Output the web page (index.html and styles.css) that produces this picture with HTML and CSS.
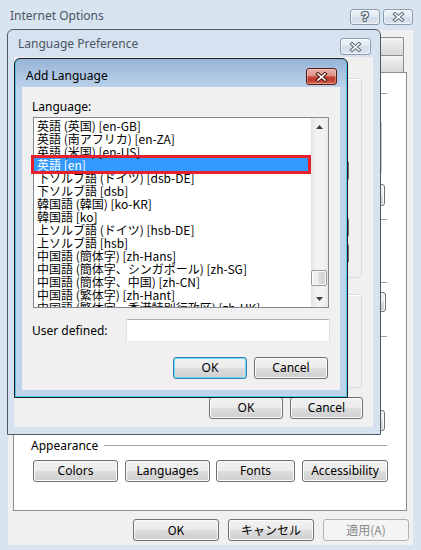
FILE: index.html
```html
<!DOCTYPE html>
<html lang="ja">
<head>
<meta charset="utf-8">
<title>Internet Options</title>
<link rel="stylesheet" href="styles.css">
</head>
<body>
<div class="io">
  <div class="io-title">
    <span class="cap-text">Internet Options</span>
    <div class="io-caps">
      <span class="capbtn"><span class="q">?</span></span>
      <span class="capbtn"><svg width="13" height="10" viewBox="0 0 13 10"><path d="M3 2 L10 8 M10 2 L3 8" stroke="#5a6878" stroke-width="3.6" stroke-linecap="square"/><path d="M3 2 L10 8 M10 2 L3 8" stroke="#fff" stroke-width="1.6" stroke-linecap="square"/></svg></span>
    </div>
  </div>
  <div class="io-client">
    <div class="tabs">
      <div class="tabrow t1"><span class="tab"></span><span class="tab"></span><span class="tab"></span></div>
      <div class="tabrow t2"><span class="tab"></span><span class="tab"></span><span class="tab"></span><span class="tab"></span></div>
    </div>
    <div class="panel">
      <div class="grp g1"><i class="rule"></i></div>
      <div class="homebox"></div>
      <div class="btnrow r1"><span class="btn w85"></span><span class="btn w85"></span><span class="btn w85"></span></div>
      <div class="grp g2"><i class="rule"></i></div>
      <div class="grp g3"><i class="rule"></i></div>
      <div class="btnrow r2"><span class="btn w75"></span></div>
      <div class="grp g4"><i class="rule"></i></div>
      <div class="btnrow r3"><span class="btn w75"></span></div>
      <div class="grp g5"><span>Appearance</span><i class="rule"></i></div>
      <div class="btnrow appear">
        <span class="btn b-colors">Colors</span>
        <span class="btn b-langs">Languages</span>
        <span class="btn b-fonts">Fonts</span>
        <span class="btn b-access">Accessibility</span>
      </div>
    </div>
    <div class="btnrow footer">
      <span class="btn jp">OK</span>
      <span class="btn jp">キャンセル</span>
      <span class="btn jp dis">適用(A)</span>
    </div>
  </div>
</div>

<div class="win lp">
  <div class="lp-title">
    <span class="cap-text">Language Preference</span>
    <span class="capbtn lp-close"><svg width="13" height="10" viewBox="0 0 13 10"><path d="M3 2 L10 8 M10 2 L3 8" stroke="#5a6878" stroke-width="3.6" stroke-linecap="square"/><path d="M3 2 L10 8 M10 2 L3 8" stroke="#fff" stroke-width="1.6" stroke-linecap="square"/></svg></span>
  </div>
  <div class="lp-client">
    <div class="gbox gb1">
      <span class="btn w75 s1"></span>
      <span class="btn w75 s2"></span>
      <span class="btn w75 s3"></span>
    </div>
    <div class="gbox gb2"></div>
    <div class="btnrow lp-btns"><span class="btn w74">OK</span><span class="btn w73">Cancel</span></div>
  </div>
</div>

<div class="win al">
  <div class="al-title">
    <span class="cap-text">Add Language</span>
    <span class="redx"><svg width="13" height="10" viewBox="0 0 13 10"><path d="M3 2 L10 8 M10 2 L3 8" stroke="#4a1810" stroke-width="3.6" stroke-linecap="square"/><path d="M3 2 L10 8 M10 2 L3 8" stroke="#fff" stroke-width="1.6" stroke-linecap="square"/></svg></span>
  </div>
  <div class="al-client">
    <div class="al-label">Language:</div>
    <div class="list">
      <div class="items">
        <div class="item">英語 (英国) [en-GB]</div>
        <div class="item">英語 (南アフリカ) [en-ZA]</div>
        <div class="item">英語 (米国) [en-US]</div>
        <div class="item sel">英語 [en]</div>
        <div class="item">下ソルブ語 (ドイツ) [dsb-DE]</div>
        <div class="item">下ソルブ語 [dsb]</div>
        <div class="item">韓国語 (韓国) [ko-KR]</div>
        <div class="item">韓国語 [ko]</div>
        <div class="item">上ソルブ語 (ドイツ) [hsb-DE]</div>
        <div class="item">上ソルブ語 [hsb]</div>
        <div class="item">中国語 (簡体字) [zh-Hans]</div>
        <div class="item">中国語 (簡体字、シンガポール) [zh-SG]</div>
        <div class="item">中国語 (簡体字、中国) [zh-CN]</div>
        <div class="item">中国語 (繁体字) [zh-Hant]</div>
        <div class="item">中国語 (繁体字、香港特別行政区) [zh-HK]</div>
      </div>
      <div class="sbar">
        <div class="sb-btn"><svg width="7" height="4" viewBox="0 0 7 4"><path d="M3.5 0 L7 4 L0 4 Z" fill="#3f3f3f"/></svg></div>
        <div class="sb-track"><div class="thumb"></div></div>
        <div class="sb-btn"><svg width="7" height="4" viewBox="0 0 7 4"><path d="M0 0 L7 0 L3.5 4 Z" fill="#3f3f3f"/></svg></div>
      </div>
      <div class="mark"></div>
    </div>
    <div class="user-row"><span>User defined:</span><span class="input"></span></div>
    <div class="btnrow al-btns"><span class="btn w74 def">OK</span><span class="btn w74">Cancel</span></div>
  </div>
</div>
</body>
</html>
```

FILE: styles.css
```css
* { box-sizing: border-box; }
html, body { margin: 0; padding: 0; }
body {
  width: 421px;
  height: 550px;
  overflow: hidden;
  position: relative;
  font-family: "Noto Sans", "Noto Sans CJK JP", sans-serif;
  font-size: 12px;
  color: #000;
  background: #d9e4f1;
}

/* ---------- Internet Options (base window) ---------- */
.io {
  width: 421px;
  height: 550px;
  display: flex;
  flex-direction: column;
  background: #d9e4f1;
}
.io-title {
  height: 30px;
  display: flex;
  align-items: flex-start;
  padding-left: 10px;
}
.cap-text {
  line-height: 16px;
  margin-top: 8px;
  color: #4a5563;
  white-space: nowrap;
}
.io-caps {
  margin-left: auto;
  margin-top: 9px;
  margin-right: 8px;
  display: flex;
  gap: 3px;
}
.capbtn {
  width: 30px;
  height: 16px;
  border: 1px solid #8c9cb0;
  border-radius: 3px;
  background: linear-gradient(#eef3f8, #e0e8f1 50%, #d3dde9 50%, #dbe4ee);
  box-shadow: inset 0 0 0 1px rgba(255, 255, 255, 0.55);
  display: flex;
  align-items: center;
  justify-content: center;
}
.q {
  font: bold 12px "Liberation Sans", sans-serif;
  line-height: 12px;
  color: #fff;
  text-shadow: 1px 0 #5a6878, -1px 0 #5a6878, 0 1px #5a6878, 0 -1px #5a6878,
    1px 1px #5a6878, -1px -1px #5a6878, 1px -1px #5a6878, -1px 1px #5a6878;
}
.io-client {
  flex: 1;
  margin: 0 8px 5px;
  background: #f0f0f0;
  padding: 7px 6px 0 5px;
  display: flex;
  flex-direction: column;
}
.tabs {
  height: 35px;
  display: flex;
  flex-direction: column;
}
.tabrow {
  display: flex;
  justify-content: flex-end;
  margin-right: 3px;
}
.tabrow.t1 { height: 18px; }
.tabrow.t2 { height: 17px; }
.tab {
  width: 100px;
  margin-left: -1px;
  border: 1px solid #898c95;
  border-bottom: none;
  border-radius: 2px 2px 0 0;
  background: linear-gradient(#f4f4f4, #e4e4e4 50%, #d8d8d8);
}
.panel {
  height: 439px;
  border: 1px solid #898c95;
  background: #fff;
  padding: 0 18px 0 17px;
  display: flex;
  flex-direction: column;
}
.grp {
  height: 13px;
  line-height: 13px;
  display: flex;
  align-items: center;
  gap: 6px;
  margin-right: 1px;
  white-space: nowrap;
}
.rule {
  flex: 1;
  height: 1px;
  background: #a0a0a0;
}
.g1, .g2, .g3, .g4 { padding-left: 80px; }
.g1 { margin-top: 14px; }
.homebox {
  margin: 22px 6px 0 40px;
  height: 51px;
  border: 1px solid #c9ccd2;
}
.r1 { margin-top: 11px; margin-right: 3px; justify-content: flex-end; gap: 7px; }
.g2 { margin-top: 7px; }
.g3 { margin-top: 50px; }
.r2 { margin-top: 3px; margin-right: 2px; justify-content: flex-end; }
.r2 .btn { height: 20px; }
.g4 { margin-top: 18px; }
.r3 { margin-top: 67px; margin-right: 3px; justify-content: flex-end; }
.r3 .btn { height: 21px; }
.g5 { margin-top: 8px; }
.appear { margin-top: 8px; margin-left: 2px; }
.b-colors { width: 85px; }
.b-langs { width: 85px; margin-left: 7px; }
.b-fonts { width: 79px; margin-left: 6px; }
.b-access { width: 86px; margin-left: 7px; }

.btnrow { display: flex; }
.btn {
  flex: none;
  height: 22px;
  border: 1px solid #707070;
  border-radius: 3px;
  background: linear-gradient(#f2f2f2, #ebebeb 50%, #dddddd 50%, #cfcfcf);
  box-shadow: inset 0 0 0 1px #fbfbfb;
  display: flex;
  align-items: center;
  justify-content: center;
  white-space: nowrap;
  line-height: 14px;
}
.w73 { width: 73px; }
.w74 { width: 74px; }
.w75 { width: 75px; }
.w85 { width: 85px; }
.footer {
  margin-top: 8px;
  margin-right: -2px;
  justify-content: flex-end;
  gap: 9px;
}
.footer .btn { width: 86px; }
.jp { font-family: "Noto Sans CJK JP", sans-serif; }
.btn.dis {
  border-color: #adb2b5;
  background: #f4f4f4;
  box-shadow: none;
  color: #8a8a8a;
}

/* ---------- floating dialog windows ---------- */
.win { position: absolute; }

.lp {
  left: 7px;
  top: 29px;
  width: 374px;
  height: 406px;
  border: 1px solid #4f5a66;
  border-radius: 6px 6px 0 0;
  background: #d6e2f0;
  display: flex;
  flex-direction: column;
}
.lp-title {
  height: 27px;
  display: flex;
  align-items: flex-start;
  padding-left: 10px;
}
.lp-title .cap-text { margin-top: 6px; }
.lp-close {
  margin-left: auto;
  margin-top: 8px;
  margin-right: 9px;
  width: 31px;
  height: 17px;
}
.lp-client {
  flex: 1;
  margin: 0 7px 7px 6px;
  background: #f0f0f0;
  padding: 21px 10px 0 7px;
  display: flex;
  flex-direction: column;
}
.gbox {
  border: 1px solid #d5dfe5;
  border-radius: 3px;
  box-shadow: inset 1px 1px #fff;
  margin-right: 1px;
}
.gb1 {
  height: 200px;
  display: flex;
  flex-direction: column;
  align-items: flex-end;
  padding-right: 12px;
}
.gb1 .btn { height: 21px; }
.s1 { margin-top: 81px; }
.s2 { margin-top: 36px; }
.s3 { margin-top: 5px; }
.gb2 { margin-top: 16px; height: 94px; }
.lp-btns { margin-top: 9px; justify-content: flex-end; gap: 7px; }

.al {
  left: 14px;
  top: 58px;
  width: 334px;
  height: 340px;
  border: 1px solid #1c1c1c;
  border-radius: 6px 6px 0 0;
  background: linear-gradient(#98b5d7, #b9d0e9 27px, #bed4eb 28px);
  box-shadow: inset 1px 0 #52c8ec, inset -1px 0 #52c8ec, inset 0 -1px #52c8ec;
  display: flex;
  flex-direction: column;
}
.al-title {
  height: 28px;
  display: flex;
  align-items: flex-start;
  padding-left: 11px;
}
.al-title .cap-text { margin-top: 9px; color: #000; }
.redx {
  margin-left: auto;
  margin-top: 9px;
  margin-right: 10px;
  width: 31px;
  height: 17px;
  border: 1px solid #5a1a12;
  border-radius: 3px;
  background: linear-gradient(#eab0a7, #da958a 45%, #c5473a 52%, #c13a2c 75%, #d5705f);
  box-shadow: inset 0 0 0 1px rgba(255, 255, 255, 0.3);
  display: flex;
  align-items: center;
  justify-content: center;
}
.al-client {
  flex: 1;
  margin: 0 7px 7px;
  background: #f0f0f0;
  padding: 12px 10px 0 10px;
  display: flex;
  flex-direction: column;
}
.al-label { height: 15px; line-height: 15px; }
.list {
  margin: 3px 1px 0 1px;
  height: 191px;
  border: 1px solid #828790;
  background: #fff;
  display: flex;
  position: relative;
}
.items {
  flex: 1;
  overflow: hidden;
  padding-top: 1px;
  font-family: "Noto Sans CJK JP", sans-serif;
  font-size: 12px;
}
.item {
  height: 13px;
  line-height: 13px;
  padding-left: 3px;
  white-space: nowrap;
}
.item.sel { background: #3399ff; color: #fff; }
.sbar {
  width: 17px;
  display: flex;
  flex-direction: column;
  background: linear-gradient(90deg, #e2e2e2, #f1f1f1 25%, #f1f1f1 75%, #e8e8e8);
}
.sb-btn {
  height: 17px;
  display: flex;
  align-items: center;
  justify-content: center;
}
.sb-track { flex: 1; }
.thumb {
  margin-top: 135px;
  width: 16px;
  height: 16px;
  border: 1px solid #979797;
  border-radius: 2px;
  background: linear-gradient(90deg, #f4f4f4, #e9e9e9 50%, #dadada 50%, #d4d4d4);
  box-shadow: inset 0 0 0 1px #fafafa;
}
.mark {
  position: absolute;
  left: -3px;
  top: 37px;
  width: 280px;
  height: 19px;
  border: 3px solid #e8202a;
}
.user-row {
  margin-top: 11px;
  height: 23px;
  display: flex;
  align-items: center;
}
.input {
  margin-left: auto;
  width: 204px;
  height: 23px;
  border: 1px solid;
  border-color: #abadb3 #dbdfe6 #e3e9ef #e2e3ea;
  border-radius: 2px;
  background: #fff;
}
.al-btns { margin-top: 15px; margin-right: 2px; justify-content: flex-end; gap: 7px; }
.btn.def {
  border-color: #3c7fb1;
  box-shadow: inset 0 0 0 1px #6dd6f7;
}
```
